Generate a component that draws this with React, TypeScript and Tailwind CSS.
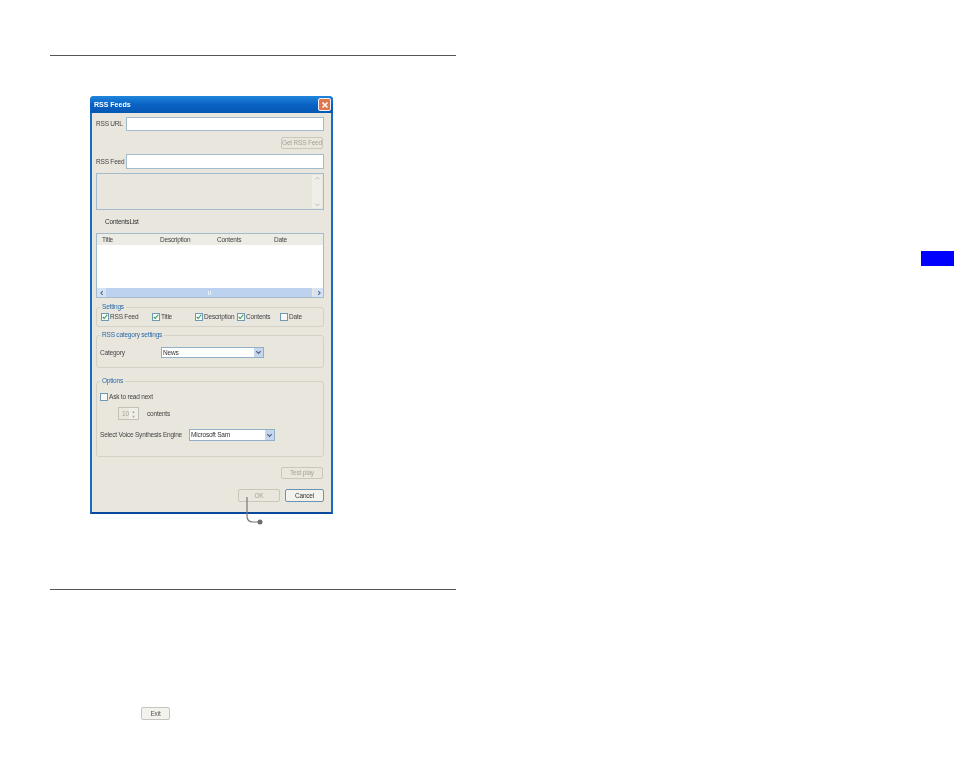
import type { ReactNode } from "react"

const font = "font-['Liberation_Sans',sans-serif]"

function Btn({ label, className, disabled }: { label: string; className: string; disabled?: boolean }) {
  return (
    <div
      className={`flex items-center justify-center whitespace-nowrap rounded-[2px] border text-[6.5px] tracking-[-0.2px] ${
        disabled ? "border-[#c9c7ba] text-[#a5a399]" : "border-[#6a94b5] bg-[#f3f2ec] text-[#333]"
      } ${className}`}
    >
      {label}
    </div>
  )
}

function Check({ on }: { on?: boolean }) {
  return (
    <span className="flex h-[8px] w-[8px] shrink-0 items-center justify-center border border-[#6f9ab5] bg-[#f8f8f4]">
      {on && (
        <svg viewBox="0 0 8 8" className="h-[6px] w-[6px]">
          <path d="M1 4l2 2 4-5" fill="none" stroke="#2aa05a" strokeWidth="1.5" />
        </svg>
      )}
    </span>
  )
}

function CheckItem({ label, on, className }: { label: string; on?: boolean; className: string }) {
  return (
    <div className={`flex items-center gap-[1px] whitespace-nowrap ${className}`}>
      <Check on={on} />
      <span>{label}</span>
    </div>
  )
}

function Group({ title, className, children }: { title: string; className: string; children: ReactNode }) {
  return (
    <div className={`relative rounded-[3px] border border-[#d4d1c6] ${className}`}>
      <span className="absolute left-[3px] top-[-5px] whitespace-nowrap bg-[#e9e6de] px-[2px] text-[6.5px] leading-[8px] text-[#2a6aa8]">
        {title}
      </span>
      {children}
    </div>
  )
}

function Combo({ value, className }: { value: string; className: string }) {
  return (
    <div className={`flex items-center justify-between border border-[#8fb0c8] bg-white ${className}`}>
      <span className="pl-[1px] text-[6.5px] text-[#333]">{value}</span>
      <span className="flex h-full w-[9px] items-center justify-center bg-[#c6d6ec]">
        <svg viewBox="0 0 8 8" className="h-[7px] w-[7px]">
          <path d="M1.5 2.5L4 5l2.5-2.5" fill="none" stroke="#4d6185" strokeWidth="1.4" />
        </svg>
      </span>
    </div>
  )
}

function Dialog() {
  return (
    <div className="ml-[40px] mt-[40px] flex h-[418px] w-[243px] flex-col rounded-t-[4px] border-x-2 border-b-2 border-x-[#1a6cc4] border-b-[#0a4a9c] bg-[#e9e6de] text-[6.5px] leading-[8px] tracking-[-0.2px] text-[#444] blur-[0.25px]">
      <div className="mx-[-2px] flex h-[17px] shrink-0 items-center justify-between rounded-t-[4px] bg-gradient-to-b from-[#1f86dc] via-[#0a62c4] to-[#0658b4] pl-[4px] pr-[2px]">
        <span className="text-[7px] font-bold tracking-normal text-white">RSS Feeds</span>
        <span className="flex h-[13px] w-[13px] items-center justify-center rounded-[2px] border border-[#f2f2f2] bg-[#e0784f]">
          <svg viewBox="0 0 8 8" className="h-[8px] w-[8px]">
            <path d="M1.5 1.5l5 5M6.5 1.5l-5 5" stroke="#fff" strokeWidth="1.5" />
          </svg>
        </span>
      </div>

      <div className="flex flex-col pl-[4px] pr-[7px]">
        <div className="mt-[4px] flex h-[14px] items-center justify-between whitespace-nowrap">
          <span>RSS URL</span>
          <div className="h-full w-[198px] shrink-0 border border-[#a3bccd] bg-white" />
        </div>
        <div className="mt-[6px] flex justify-end pr-[1px]">
          <Btn label="Get RSS Feed" disabled className="h-[12px] w-[42px]" />
        </div>
        <div className="mt-[5px] flex h-[15px] items-center justify-between whitespace-nowrap">
          <span>RSS Feed</span>
          <div className="h-full w-[198px] shrink-0 border border-[#a3bccd] bg-white" />
        </div>
        <div className="mt-[4px] flex h-[37px] justify-end border border-[#a3bccd] py-[1px] pr-[1px]">
          <div className="flex w-[10px] flex-col items-center justify-between bg-[#efeee8]">
            <svg viewBox="0 0 8 8" className="h-[7px] w-[7px]"><path d="M1.5 5L4 2.5 6.5 5" fill="none" stroke="#b8b8b0" /></svg>
            <svg viewBox="0 0 8 8" className="h-[7px] w-[7px]"><path d="M1.5 3L4 5.5 6.5 3" fill="none" stroke="#b8b8b0" /></svg>
          </div>
        </div>

        <div className="mt-[8px] h-[8px] pl-[9px] text-[#333]">ContentsList</div>

        <div className="mt-[7px] flex h-[65px] flex-col border border-[#a3bccd]">
          <div className="flex h-[11px] shrink-0 items-center bg-[#ecebe4]">
            <span className="w-[63px] pl-[5px]">Title</span>
            <span className="w-[57px]">Description</span>
            <span className="w-[57px]">Contents</span>
            <span>Date</span>
          </div>
          <div className="flex-1 bg-white" />
          <div className="flex h-[9px] shrink-0 items-center bg-[#e8e6dc]">
            <span className="flex h-full w-[9px] items-center justify-center bg-[#d4e2f4]">
              <svg viewBox="0 0 8 8" className="h-[6px] w-[6px]"><path d="M5 1.5L2.5 4 5 6.5" fill="none" stroke="#4d6185" strokeWidth="1.4" /></svg>
            </span>
            <span className="flex h-full flex-1 items-center justify-center bg-[#bcd2ee]">
              <span className="h-[4px] w-[3px] border-x border-[#e8f0fa]" />
            </span>
            <span className="ml-[2px] flex h-full w-[9px] items-center justify-center bg-[#d4e2f4]">
              <svg viewBox="0 0 8 8" className="h-[6px] w-[6px]"><path d="M3 1.5L5.5 4 3 6.5" fill="none" stroke="#4d6185" strokeWidth="1.4" /></svg>
            </span>
          </div>
        </div>

        <Group title="Settings" className="mt-[9px] h-[20px]">
          <div className="flex h-full items-center pl-[4px]">
            <CheckItem label="RSS Feed" on className="w-[51px]" />
            <CheckItem label="Title" on className="w-[43px]" />
            <CheckItem label="Description" on className="w-[42px]" />
            <CheckItem label="Contents" on className="w-[43px]" />
            <CheckItem label="Date" className="" />
          </div>
        </Group>

        <Group title="RSS category settings" className="mt-[8px] h-[33px]">
          <div className="flex items-center pl-[3px] pt-[11px]">
            <span className="w-[61px]">Category</span>
            <Combo value="News" className="h-[11px] w-[103px]" />
          </div>
        </Group>

        <Group title="Options" className="mt-[13px] h-[76px]">
          <div className="flex flex-col pl-[3px] pt-[11px]">
            <div className="flex items-center gap-[1px] whitespace-nowrap">
              <Check />
              <span>Ask to read next</span>
            </div>
            <div className="ml-[18px] mt-[6px] flex items-center">
              <div className="flex h-[13px] w-[21px] items-center justify-between border border-[#c3c1b6] pl-[3px] text-[#a5a399]">
                10
                <span className="flex h-full w-[9px] flex-col items-center justify-center bg-[#efeee8] text-[4px] leading-[5px]">
                  <span>▲</span>
                  <span>▼</span>
                </span>
              </div>
              <span className="ml-[8px]">contents</span>
            </div>
            <div className="mt-[9px] flex items-center">
              <span className="w-[89px] whitespace-nowrap">Select Voice Synthesis Engine</span>
              <Combo value="Microsoft Sam" className="h-[12px] w-[86px]" />
            </div>
          </div>
        </Group>

        <div className="mt-[10px] flex justify-end pr-[1px]">
          <Btn label="Test play" disabled className="h-[12px] w-[42px]" />
        </div>
        <div className="mt-[10px] flex justify-end gap-[5px]">
          <Btn label="OK" disabled className="h-[13px] w-[42px]" />
          <Btn label="Cancel" className="h-[13px] w-[39px]" />
        </div>
      </div>
    </div>
  )
}

export default function App() {
  return (
    <div className={`relative h-[762px] w-[954px] overflow-hidden bg-white ${font}`}>
      <div className="ml-[50px] w-[406px] pt-[55px]">
        <div className="h-px bg-[#555]" />
        <Dialog />
        <div className="mt-[75px] h-px bg-[#555]" />
        <Btn label="Exit" className="ml-[91px] mt-[117px] h-[13px] w-[29px] border-[#c4c4c0] bg-[#eeeeea] text-[#555] blur-[0.25px]" />
      </div>

      {/* callout from the OK button */}
      <svg className="absolute left-[240px] top-[490px] h-[40px] w-[30px]" viewBox="0 0 30 40">
        <path d="M7 7V26q0 6 6 6H20" fill="none" stroke="#777" strokeWidth="1.2" />
        <circle cx="20" cy="32" r="2.5" fill="#6c6c6c" />
      </svg>

      {/* section tab at the page edge */}
      <div className="absolute right-0 top-[251px] h-[15px] w-[33px] bg-[#0000ff]" />
    </div>
  )
}
